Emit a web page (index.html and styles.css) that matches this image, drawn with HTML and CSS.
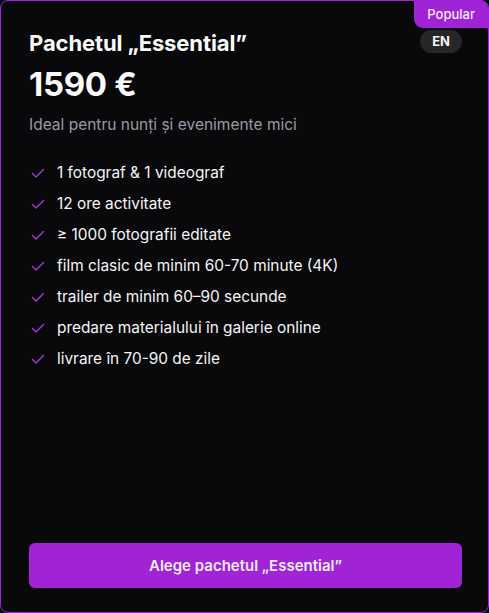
FILE: index.html
```html
<!DOCTYPE html>
<html lang="ro">
<head>
  <meta charset="UTF-8" />
  <meta name="viewport" content="width=device-width, initial-scale=1.0"/>
  <title>Pachetul Essential</title>
  <link rel="stylesheet" href="styles.css">
</head>
<body>

  <div class="card">
    <div class="badge">Popular</div>

    <div class="head">
      <h2>Pachetul „Essential”</h2>
      <span class="lang">EN</span>
    </div>
    <div class="price">1590 €</div>
    <p class="sub">Ideal pentru nunți și evenimente mici</p>

    <ul class="features">
      <li><svg viewBox="0 0 16 16"><path d="M2.5 8.5l3.5 3.5 7.5-7.5"/></svg>1 fotograf &amp; 1 videograf</li>
      <li><svg viewBox="0 0 16 16"><path d="M2.5 8.5l3.5 3.5 7.5-7.5"/></svg>12 ore activitate</li>
      <li><svg viewBox="0 0 16 16"><path d="M2.5 8.5l3.5 3.5 7.5-7.5"/></svg>≥ 1000 fotografii editate</li>
      <li><svg viewBox="0 0 16 16"><path d="M2.5 8.5l3.5 3.5 7.5-7.5"/></svg>film clasic de minim 60-70 minute (4K)</li>
      <li><svg viewBox="0 0 16 16"><path d="M2.5 8.5l3.5 3.5 7.5-7.5"/></svg>trailer de minim 60–90 secunde</li>
      <li><svg viewBox="0 0 16 16"><path d="M2.5 8.5l3.5 3.5 7.5-7.5"/></svg>predare materialului în galerie online</li>
      <li><svg viewBox="0 0 16 16"><path d="M2.5 8.5l3.5 3.5 7.5-7.5"/></svg>livrare în 70-90 de zile</li>
    </ul>

    <button class="cta">Alege pachetul „Essential”</button>
  </div>

</body>
</html>
```

FILE: styles.css
```css
html, body {
  height: 100%;
}

body {
  margin: 0;
  background: #09090b;
  font-family: Inter, "Noto Sans", sans-serif;
  color: #fafafa;
}

.card {
  position: relative;
  box-sizing: border-box;
  height: 100%;
  border: 1px solid #a023d5;
  border-radius: 8px;
  background: #09090b;
  padding: 28px 26px 24px 28px;
  display: flex;
  flex-direction: column;
  overflow: hidden;
}

.badge {
  position: absolute;
  top: 0;
  right: 0;
  background: #a023d5;
  color: #f5ecfb;
  font-size: 13px;
  font-weight: 500;
  padding: 5px 13px 6px 13px;
  border-bottom-left-radius: 9px;
}

.head {
  display: flex;
  justify-content: space-between;
  align-items: center;
}

h2 {
  margin: 0;
  font-size: 22px;
  font-weight: 700;
  line-height: 28px;
  letter-spacing: -0.1px;
}

.lang {
  background: #27272a;
  color: #f4f4f5;
  font-size: 13px;
  font-weight: 700;
  padding: 3px 12px;
  border-radius: 12px;
  line-height: 17px;
  margin-top: -4px;
}

.price {
  font-size: 33px;
  font-weight: 700;
  line-height: 40px;
  margin-top: 7px;
  letter-spacing: -0.3px;
}

.sub {
  margin: 10px 0 0 0;
  font-size: 15.5px;
  line-height: 22px;
  color: #9a9aa3;
}

.features {
  list-style: none;
  margin: 21px 0 0 0;
  padding: 0;
}

.features li {
  display: flex;
  align-items: center;
  gap: 11px;
  font-size: 15.4px;
  line-height: 22px;
  height: 31px;
  color: #f4f4f5;
}

.features svg {
  width: 16px;
  height: 16px;
  margin-left: 1px;
  fill: none;
  stroke: #a23ad6;
  stroke-width: 1.4;
  stroke-linecap: round;
  stroke-linejoin: round;
}

.cta {
  margin-top: auto;
  height: 45px;
  border: none;
  border-radius: 6px;
  background: #a023d5;
  color: #f5ecfb;
  font-family: inherit;
  font-size: 15px;
  font-weight: 600;
  cursor: pointer;
}
```
